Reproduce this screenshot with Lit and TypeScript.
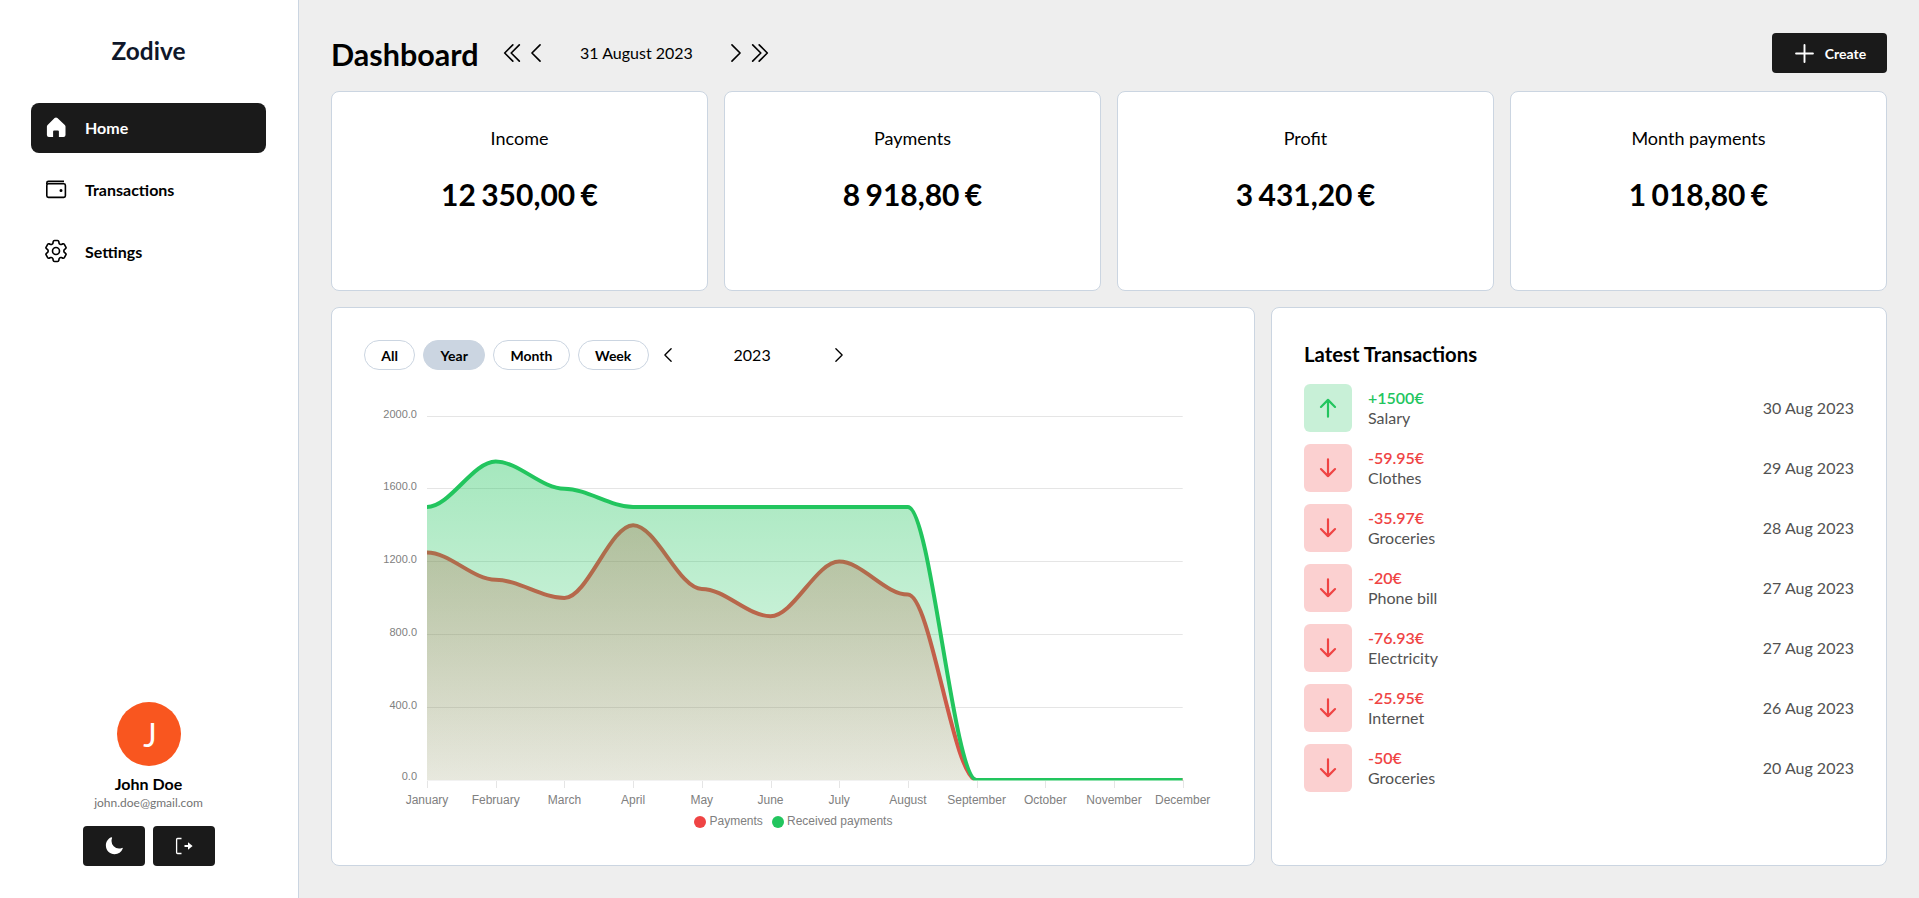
import { LitElement, html, svg, css } from 'lit';
import { customElement } from 'lit/decorators.js';

const MONTHS = ['January', 'February', 'March', 'April', 'May', 'June', 'July', 'August', 'September', 'October', 'November', 'December'];
const RECEIVED = [1500, 1750, 1600, 1500, 1500, 1500, 1500, 1500, 0, 0, 0, 0];
const PAYMENTS = [1250, 1100, 1000, 1400, 1050, 900, 1200, 1018.8, 0, 0, 0, 0];

const STATS = [
  { title: 'Income', value: '12 350,00 €' },
  { title: 'Payments', value: '8 918,80 €' },
  { title: 'Profit', value: '3 431,20 €' },
  { title: 'Month payments', value: '1 018,80 €' }
];

const TRANSACTIONS = [
  { amount: '+1500€', label: 'Salary', date: '30 Aug 2023', up: true },
  { amount: '-59.95€', label: 'Clothes', date: '29 Aug 2023', up: false },
  { amount: '-35.97€', label: 'Groceries', date: '28 Aug 2023', up: false },
  { amount: '-20€', label: 'Phone bill', date: '27 Aug 2023', up: false },
  { amount: '-76.93€', label: 'Electricity', date: '27 Aug 2023', up: false },
  { amount: '-25.95€', label: 'Internet', date: '26 Aug 2023', up: false },
  { amount: '-50€', label: 'Groceries', date: '20 Aug 2023', up: false }
];

// chart geometry, in svg pixels
const CHART_W = 858;
const CHART_H = 443;
const PLOT_X = 63;
const STEP_X = 68.7;
const ZERO_Y = 390;
const PER_UNIT = 0.182;

const px = (i: number) => PLOT_X + i * STEP_X;
const py = (v: number) => ZERO_Y - v * PER_UNIT;

// every point has a flat tangent, that is what gives the shoulders at march, may and august
function curve(values: number[]) {
  let d = `M${px(0)} ${py(values[0])}`;
  const h = STEP_X / 3;
  for (let i = 0; i < values.length - 1; i++) {
    d += ` C${px(i) + h} ${py(values[i])} ${px(i + 1) - h} ${py(values[i + 1])} ${px(i + 1)} ${py(values[i + 1])}`;
  }
  return d;
}

const icons = {
  home: html`<svg class="ic" viewBox="0 0 24 24" fill="currentColor"><path d="M10.6 3.1a2 2 0 0 1 2.8 0l7.4 6.9a2 2 0 0 1 .7 1.5V20a2 2 0 0 1-2 2h-4.6v-5.5a1 1 0 0 0-1-1h-3.8a1 1 0 0 0-1 1V22H4.9a2 2 0 0 1-2-2v-8.5a2 2 0 0 1 .7-1.5z"/></svg>`,
  wallet: html`<svg class="ic" viewBox="0 0 24 24" fill="none" stroke="currentColor" stroke-width="1.6"><rect x="2.8" y="6.8" width="18.6" height="13.6" rx="1.6"/><path d="M2.8 7.5V6a1.6 1.6 0 0 1 1.6-1.6H20"/><circle cx="17" cy="13.5" r=".7" fill="currentColor"/></svg>`,
  gear: html`<svg class="ic gear" viewBox="0 0 24 24" fill="none" stroke="currentColor" stroke-width="1.4" stroke-linejoin="round"><path d="M9.594 3.94c.09-.542.56-.94 1.11-.94h2.593c.55 0 1.02.398 1.11.94l.213 1.281c.063.374.313.686.645.87.074.04.147.083.22.127.324.196.72.257 1.075.124l1.217-.456a1.125 1.125 0 011.37.49l1.296 2.247a1.125 1.125 0 01-.26 1.431l-1.003.827c-.293.24-.438.613-.431.992a6.759 6.759 0 010 .255c-.007.378.138.75.43.99l1.005.828c.424.35.534.954.26 1.43l-1.298 2.247a1.125 1.125 0 01-1.369.491l-1.217-.456c-.355-.133-.75-.072-1.076.124a6.57 6.57 0 01-.22.128c-.331.183-.581.495-.644.869l-.213 1.28c-.09.543-.56.941-1.11.941h-2.594c-.55 0-1.02-.398-1.11-.94l-.213-1.281c-.062-.374-.312-.686-.644-.87a6.52 6.52 0 01-.22-.127c-.325-.196-.72-.257-1.076-.124l-1.217.456a1.125 1.125 0 01-1.369-.49l-1.297-2.247a1.125 1.125 0 01.26-1.431l1.004-.827c.292-.24.437-.613.43-.992a6.932 6.932 0 010-.255c.007-.378-.138-.75-.43-.99l-1.004-.828a1.125 1.125 0 01-.26-1.43l1.297-2.247a1.125 1.125 0 011.37-.491l1.216.456c.356.133.751.072 1.076-.124.072-.044.146-.087.22-.128.332-.183.582-.495.644-.869l.214-1.281z"/><path d="M15 12a3 3 0 11-6 0 3 3 0 016 0z"/></svg>`,
  moon: html`<svg class="ic20" viewBox="0 0 24 24" fill="currentColor"><path d="M9.528 1.718a.75.75 0 01.162.819A8.97 8.97 0 009 6a9 9 0 009 9 8.97 8.97 0 003.463-.69.75.75 0 01.981.98 10.503 10.503 0 01-9.694 6.46c-5.799 0-10.5-4.701-10.5-10.5 0-4.368 2.667-8.112 6.46-9.694a.75.75 0 01.818.162z"/></svg>`,
  logout: html`<svg class="ic" viewBox="0 0 24 24" fill="none" stroke="currentColor"><path d="M9.5 4.5H5.6a1 1 0 0 0-1 1v13a1 1 0 0 0 1 1h3.9" stroke-width="1.3"/><path d="M12.5 12h5" stroke-width="2"/><path d="M16 8.2l4.6 3.8-4.6 3.8z" fill="currentColor" stroke="none"/></svg>`,
  plus: html`<svg class="ic27" viewBox="0 0 24 24" fill="none" stroke="currentColor" stroke-width="1.7" stroke-linecap="round"><path d="M12 4.5v15m7.5-7.5h-15"/></svg>`,
  left: html`<svg class="ic26" viewBox="0 0 24 24" fill="none" stroke="currentColor" stroke-width="1.5" stroke-linecap="round" stroke-linejoin="round"><path d="M15.75 19.5L8.25 12l7.5-7.5"/></svg>`,
  right: html`<svg class="ic26" viewBox="0 0 24 24" fill="none" stroke="currentColor" stroke-width="1.5" stroke-linecap="round" stroke-linejoin="round"><path d="M8.25 4.5l7.5 7.5-7.5 7.5"/></svg>`,
  dleft: html`<svg class="ic26" viewBox="0 0 24 24" fill="none" stroke="currentColor" stroke-width="1.5" stroke-linecap="round" stroke-linejoin="round"><path d="M18.75 19.5l-7.5-7.5 7.5-7.5m-6 15L5.25 12l7.5-7.5"/></svg>`,
  dright: html`<svg class="ic26" viewBox="0 0 24 24" fill="none" stroke="currentColor" stroke-width="1.5" stroke-linecap="round" stroke-linejoin="round"><path d="M5.25 4.5l7.5 7.5-7.5 7.5m6-15l7.5 7.5-7.5 7.5"/></svg>`,
  smallLeft: html`<svg class="ic20" viewBox="0 0 24 24" fill="none" stroke="currentColor" stroke-width="1.6" stroke-linecap="round" stroke-linejoin="round"><path d="M15.75 19.5L8.25 12l7.5-7.5"/></svg>`,
  smallRight: html`<svg class="ic20" viewBox="0 0 24 24" fill="none" stroke="currentColor" stroke-width="1.6" stroke-linecap="round" stroke-linejoin="round"><path d="M8.25 4.5l7.5 7.5-7.5 7.5"/></svg>`,
  up: html`<svg class="ic26" viewBox="0 0 24 24" fill="none" stroke="currentColor" stroke-width="2" stroke-linecap="round" stroke-linejoin="round"><path d="M12 20V4.5M5.5 11l6.5-6.5 6.5 6.5"/></svg>`,
  down: html`<svg class="ic26" viewBox="0 0 24 24" fill="none" stroke="currentColor" stroke-width="2" stroke-linecap="round" stroke-linejoin="round"><path d="M12 4v15.5M5.5 13l6.5 6.5 6.5-6.5"/></svg>`
};

@customElement('app-root')
export class AppRoot extends LitElement {
  static styles = css`
    :host {
      display: flex;
      height: 100vh;
      background: #eeeeee;
      font-family: 'Lato', 'Liberation Sans', sans-serif;
      color: #000;
      overflow: hidden;
    }
    button {
      font: inherit;
      border: none;
      background: none;
      color: inherit;
      padding: 0;
      cursor: pointer;
    }
    .ic { width: 24px; height: 24px; display: block; flex: none; }
    .ic20 { width: 20px; height: 20px; display: block; flex: none; }
    .ic26 { width: 26px; height: 26px; display: block; flex: none; }
    .ic27 { width: 27px; height: 27px; display: block; flex: none; }
    .gear { width: 28px; height: 28px; margin: -2px; }

    .sidebar {
      width: 299px;
      flex: none;
      box-sizing: border-box;
      background: #fff;
      border-right: 1px solid #cbd5e1;
      padding: 0 32px 32px 31px;
      display: flex;
      flex-direction: column;
    }
    .logo {
      height: 100px;
      margin: 0;
      display: flex;
      align-items: center;
      justify-content: center;
      font-size: 24.4px;
      font-weight: 700;
      color: #0f172a;
    }
    nav {
      margin-top: 3px;
      display: flex;
      flex-direction: column;
      gap: 12px;
    }
    .nav-item {
      height: 50px;
      box-sizing: border-box;
      padding: 0 13px 2px;
      display: flex;
      align-items: center;
      gap: 17px;
      border-radius: 8px;
      font-size: 16px;
      font-weight: 700;
    }
    .nav-item.active { background: #1a1a1a; color: #fff; }
    .user {
      margin-top: auto;
      display: flex;
      flex-direction: column;
      align-items: center;
    }
    .avatar {
      width: 64px;
      height: 64px;
      box-sizing: border-box;
      padding-left: 3px;
      border-radius: 50%;
      background: #f9561f;
      color: #fff;
      font-size: 32px;
      display: flex;
      align-items: center;
      justify-content: center;
    }
    .name { font-size: 16px; font-weight: 700; margin-top: 8px; line-height: 20px; }
    .email { font-size: 12px; color: #737373; line-height: 16px; margin-top: 1px; }
    .user-actions { display: flex; gap: 8px; margin-top: 15px; }
    .user-actions button {
      width: 62px;
      height: 40px;
      border-radius: 4px;
      background: #1a1a1a;
      color: #fff;
      display: flex;
      align-items: center;
      justify-content: center;
    }

    main {
      flex: 1;
      min-width: 0;
      padding: 33px 32px 32px;
      display: flex;
      flex-direction: column;
      gap: 16px;
    }
    header { display: flex; align-items: center; height: 40px; flex: none; margin-bottom: 2px; }
    h1 { margin: 0 22px 0 0; padding-top: 1px; font-size: 30.5px; font-weight: 700; line-height: 40px; }
    .date-nav { display: flex; align-items: center; }
    .date-nav button { width: 24px; display: flex; justify-content: center; }
    .date-nav button svg { margin: 0 -1px; }
    .date-nav span { width: 176px; padding-bottom: 2px; text-align: center; font-size: 16px; }
    .create {
      margin-left: auto;
      width: 115px;
      height: 40px;
      padding-right: 2px;
      border-radius: 4px;
      background: #1a1a1a;
      color: #fff;
      display: flex;
      align-items: center;
      justify-content: center;
      gap: 7px;
      font-size: 14px;
      font-weight: 700;
    }

    .card {
      background: #fff;
      border: 1px solid #cbd5e1;
      border-radius: 8px;
      box-sizing: border-box;
    }
    .stats {
      display: grid;
      grid-template-columns: repeat(4, 1fr);
      gap: 16px;
      flex: none;
    }
    .stat {
      height: 200px;
      padding-top: 32px;
      text-align: center;
    }
    .stat-title { font-size: 18px; line-height: 28px; }
    .stat-value { font-size: 30px; font-weight: 700; line-height: 36px; margin-top: 24px; word-spacing: -2px; }

    .lower {
      flex: 1;
      min-height: 0;
      display: grid;
      grid-template-columns: 3fr 2fr;
      gap: 16px;
    }
    .chart-card { padding: 32px; min-width: 0; }
    .toolbar { display: flex; align-items: center; gap: 8px; height: 30px; }
    .pill {
      height: 30px;
      padding: 0 16.3px;
      box-sizing: border-box;
      border: 1px solid #cbd5e1;
      border-radius: 15px;
      font-size: 14px;
      font-weight: 700;
    }
    .pill.active { background: #cbd5e1; }
    .year-nav { display: flex; align-items: center; margin-left: 1px; }
    .year-nav span { width: 151px; padding: 0 2px 2px 0; box-sizing: border-box; text-align: center; font-size: 16px; }
    .chart { display: block; margin-top: 20px; }
    .chart text {
      font-family: 'Liberation Sans', Arial, sans-serif;
      fill: #808080;
    }
    .tick-y { font-size: 11px; text-anchor: end; }
    .tick-x { font-size: 12px; text-anchor: middle; }
    .legend { font-size: 12px; }

    .tx-card { padding: 32px; min-width: 0; }
    h2 { margin: 0; font-size: 20.3px; font-weight: 700; line-height: 28px; margin-top: 0; }
    .tx-list { display: flex; flex-direction: column; gap: 12px; margin-top: 16px; }
    .tx { display: flex; align-items: center; height: 48px; }
    .tx-icon {
      width: 48px;
      height: 48px;
      border-radius: 6px;
      display: flex;
      align-items: center;
      justify-content: center;
      margin-right: 16px;
    }
    .tx.up .tx-icon { background: rgba(34, 197, 94, 0.25); color: #22c55e; }
    .tx.down .tx-icon { background: rgba(239, 68, 68, 0.25); color: #ef4444; }
    .tx-amount { font-size: 16px; font-weight: 600; line-height: 20px; }
    .tx.up .tx-amount { color: #22c55e; }
    .tx.down .tx-amount { color: #ef4444; }
    .tx-label { font-size: 16px; line-height: 20px; color: #525252; }
    .tx-date { margin-left: auto; margin-bottom: 2px; font-size: 16px; color: #525252; }
  `;

  private renderChart() {
    const grid = [2000, 1600, 1200, 800, 400, 0];
    const received = curve(RECEIVED);
    const payments = curve(PAYMENTS);
    const last = px(11);
    const closed = (d: string) => `${d} L${last} ${ZERO_Y} L${px(0)} ${ZERO_Y} Z`;
    return html`<svg class="chart" width=${CHART_W} height=${CHART_H} viewBox="0 0 ${CHART_W} ${CHART_H}">
      <defs>
        <clipPath id="plot"><rect x=${PLOT_X} y="0" width=${last - PLOT_X} height=${ZERO_Y + 1}></rect></clipPath>
        <linearGradient id="fill-red" gradientUnits="userSpaceOnUse" x1="0" y1="26" x2="0" y2=${ZERO_Y}>
          <stop offset="0" stop-color="#ef4444" stop-opacity="0.45"></stop>
          <stop offset="1" stop-color="#ef4444" stop-opacity="0.1"></stop>
        </linearGradient>
        <linearGradient id="fill-green" gradientUnits="userSpaceOnUse" x1="0" y1="26" x2="0" y2=${ZERO_Y}>
          <stop offset="0" stop-color="#22c55e" stop-opacity="0.45"></stop>
          <stop offset="1" stop-color="#22c55e" stop-opacity="0.1"></stop>
        </linearGradient>
      </defs>
      ${grid.map((v) => {
        const y = Math.floor(py(v)) + 0.5;
        return svg`
          <line x1=${PLOT_X} x2=${last} y1=${y} y2=${y} stroke="#e5e5e5"></line>
          <text class="tick-y" x=${PLOT_X - 10} y=${v === 0 ? y - 0.5 : y + 1}>${v.toFixed(1)}</text>`;
      })}
      ${MONTHS.map((m, i) => {
        const x = Math.round(px(i)) + 0.5;
        return svg`
          <line x1=${x} x2=${x} y1=${ZERO_Y} y2=${ZERO_Y + 8} stroke="#e5e5e5"></line>
          <text class="tick-x" x=${px(i)} y=${ZERO_Y + 24}>${m}</text>`;
      })}
      <g clip-path="url(#plot)">
        <path d=${closed(payments)} fill="url(#fill-red)"></path>
        <path d=${payments} fill="none" stroke="#ef4444" stroke-width="4"></path>
        <path d=${closed(received)} fill="url(#fill-green)"></path>
        <path d=${received} fill="none" stroke="#22c55e" stroke-width="4"></path>
      </g>
      <line x1=${PLOT_X} x2=${last} y1=${ZERO_Y + 0.5} y2=${ZERO_Y + 0.5} stroke="rgba(255,255,255,0.5)"></line>
      <circle cx="336" cy="432" r="6" fill="#ef4444"></circle>
      <text class="legend" x="345.5" y="435">Payments</text>
      <circle cx="414" cy="432" r="6" fill="#22c55e"></circle>
      <text class="legend" x="423" y="435">Received payments</text>
    </svg>`;
  }

  render() {
    return html`
      <aside class="sidebar">
        <div class="logo">Zodive</div>
        <nav>
          <div class="nav-item active">${icons.home}<span>Home</span></div>
          <div class="nav-item">${icons.wallet}<span>Transactions</span></div>
          <div class="nav-item">${icons.gear}<span>Settings</span></div>
        </nav>
        <div class="user">
          <div class="avatar">J</div>
          <div class="name">John Doe</div>
          <div class="email">john.doe@gmail.com</div>
          <div class="user-actions">
            <button>${icons.moon}</button>
            <button>${icons.logout}</button>
          </div>
        </div>
      </aside>
      <main>
        <header>
          <h1>Dashboard</h1>
          <div class="date-nav">
            <button>${icons.dleft}</button>
            <button>${icons.left}</button>
            <span>31 August 2023</span>
            <button>${icons.right}</button>
            <button>${icons.dright}</button>
          </div>
          <button class="create">${icons.plus}Create</button>
        </header>
        <section class="stats">
          ${STATS.map(
            (s) => html`<div class="card stat">
              <div class="stat-title">${s.title}</div>
              <div class="stat-value">${s.value}</div>
            </div>`
          )}
        </section>
        <section class="lower">
          <div class="card chart-card">
            <div class="toolbar">
              <button class="pill">All</button>
              <button class="pill active">Year</button>
              <button class="pill">Month</button>
              <button class="pill">Week</button>
              <div class="year-nav">
                <button>${icons.smallLeft}</button>
                <span>2023</span>
                <button>${icons.smallRight}</button>
              </div>
            </div>
            ${this.renderChart()}
          </div>
          <div class="card tx-card">
            <h2>Latest Transactions</h2>
            <div class="tx-list">
              ${TRANSACTIONS.map(
                (t) => html`<div class="tx ${t.up ? 'up' : 'down'}">
                  <div class="tx-icon">${t.up ? icons.up : icons.down}</div>
                  <div>
                    <div class="tx-amount">${t.amount}</div>
                    <div class="tx-label">${t.label}</div>
                  </div>
                  <div class="tx-date">${t.date}</div>
                </div>`
              )}
            </div>
          </div>
        </section>
      </main>
    `;
  }
}
